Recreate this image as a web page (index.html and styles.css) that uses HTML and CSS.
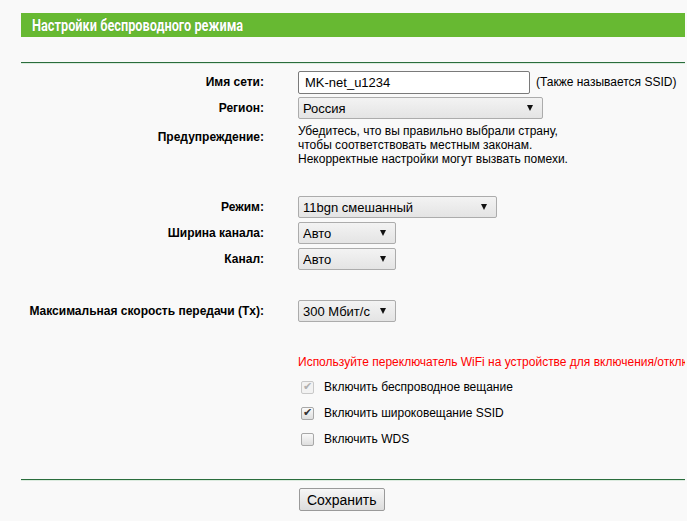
FILE: index.html
```html
<!DOCTYPE html>
<html lang="ru">
<head>
    <meta charset="UTF-8">
    <title>Настройки беспроводного режима</title>
    <link rel="stylesheet" href="styles.css">
</head>
<body>

<div class="page">
    <h1 class="title"><span class="title-text">Настройки беспроводного режима</span></h1>

    <div class="form">
        <div class="row">
            <label class="lbl" for="ssid">Имя сети:</label>
            <div class="val">
                <input type="text" id="ssid" class="text-input" value="MK-net_u1234">
                <span class="hint">(Также называется SSID)</span>
            </div>
        </div>

        <div class="row">
            <label class="lbl" for="region">Регион:</label>
            <div class="val">
                <span class="select w-region"><select id="region"><option>Россия</option></select></span>
            </div>
        </div>

        <div class="row row-top">
            <label class="lbl lbl-warn">Предупреждение:</label>
            <div class="val warn">
                Убедитесь, что вы правильно выбрали страну,<br>
                чтобы соответствовать местным законам.<br>
                Некорректные настройки могут вызвать помехи.
            </div>
        </div>

        <div class="row gap-big">
            <label class="lbl" for="mode">Режим:</label>
            <div class="val">
                <span class="select w-mode"><select id="mode"><option>11bgn смешанный</option></select></span>
            </div>
        </div>

        <div class="row">
            <label class="lbl" for="width">Ширина канала:</label>
            <div class="val">
                <span class="select w-small"><select id="width"><option>Авто</option></select></span>
            </div>
        </div>

        <div class="row">
            <label class="lbl" for="channel">Канал:</label>
            <div class="val">
                <span class="select w-small"><select id="channel"><option>Авто</option></select></span>
            </div>
        </div>

        <div class="row gap">
            <label class="lbl" for="rate">Максимальная скорость передачи (Tx):</label>
            <div class="val">
                <span class="select w-small"><select id="rate"><option>300 Мбит/с</option></select></span>
            </div>
        </div>

        <div class="row gap note-row">
            <span class="lbl"></span>
            <div class="val note">Используйте переключатель WiFi на устройстве для включения/отключения</div>
        </div>

        <div class="row">
            <span class="lbl"></span>
            <label class="val check"><input type="checkbox" checked disabled> Включить беспроводное вещание</label>
        </div>

        <div class="row">
            <span class="lbl"></span>
            <label class="val check"><input type="checkbox" checked> Включить широковещание SSID</label>
        </div>

        <div class="row">
            <span class="lbl"></span>
            <label class="val check"><input type="checkbox"> Включить WDS</label>
        </div>
    </div>

    <div class="footer">
        <button class="save">Сохранить</button>
    </div>
</div>

</body>
</html>
```

FILE: styles.css
```css
html {
    background-color: #ececec;
}

body {
    margin: 0;
    font-family: "Liberation Sans", Arial, sans-serif;
    font-size: 12px;
    color: #000;
    overflow: hidden;
}

.page {
    width: 664px;
    min-height: 521px;
    padding: 13px 2px 0 21px;
    background-color: #f9f9f9;
}

.title {
    margin: 0;
    height: 24px;
    line-height: 24px;
    padding-left: 11px;
    background-color: #67b932;
    color: #fff;
    font-family: Roboto, "Liberation Sans", sans-serif;
    font-size: 17px;
    font-weight: bold;
    text-shadow: 0 0 1px rgba(0, 0, 0, 0.25);
    white-space: nowrap;
}

/* the original uses a condensed face, squeeze the regular one */
.title-text {
    display: inline-block;
    transform: scaleX(0.75);
    transform-origin: left center;
}

.form {
    margin-top: 25px;
    padding-top: 6px;
    border-top: 1px solid #2a6d3c;
    box-shadow: inset 0 1px 0 #dcebdf;
}

.row {
    display: grid;
    grid-template-columns: 243px 1fr;
    column-gap: 34px;
    align-items: center;
    min-height: 26px;
}

.row-top {
    align-items: start;
    padding-top: 3px;
}

.gap-big {
    margin-top: 28px;
}

.gap {
    margin-top: 26px;
}

.lbl {
    text-align: right;
    font-weight: bold;
    white-space: nowrap;
}

.lbl-warn {
    padding-top: 6px;
}

.val {
    display: flex;
    align-items: center;
    white-space: nowrap;
    min-width: 0;
}

.warn {
    display: block;
    line-height: 14px;
}

.text-input {
    width: 232px;
    height: 23px;
    box-sizing: border-box;
    padding: 0 6px;
    border: 1px solid #7a7a7a;
    border-radius: 2px;
    background-color: #fff;
    font-family: "Liberation Sans", Arial, sans-serif;
    font-size: 13px;
}

.hint {
    margin-left: 6px;
    font-size: 12px;
}

.select {
    position: relative;
    display: inline-block;
}

.select select {
    appearance: none;
    width: 100%;
    height: 22px;
    padding: 0 4px;
    border: 1px solid #acacac;
    border-radius: 2px;
    background: linear-gradient(#f3f3f3, #e4e4e4);
    font-family: "Liberation Sans", Arial, sans-serif;
    font-size: 13px;
    color: #000;
}

.select::after {
    content: "";
    position: absolute;
    right: 10px;
    top: 8px;
    border-left: 3.5px solid transparent;
    border-right: 3.5px solid transparent;
    border-top: 6px solid #111;
    pointer-events: none;
}

.w-region {
    width: 245px;
}

.w-mode {
    width: 199px;
}

.w-small {
    width: 98px;
}

.note-row {
    min-height: 24px;
}

.note {
    color: #ff0000;
    font-size: 12px;
    overflow: hidden;
}

.check {
    font-size: 12px;
}

.check input {
    appearance: none;
    position: relative;
    width: 13px;
    height: 13px;
    margin: 0 10px 0 3px;
    border: 1px solid #a8a8a8;
    border-radius: 2px;
    background: linear-gradient(#fafafa, #dedede);
}

.check input:checked::before {
    content: "\2714";
    position: absolute;
    left: 1px;
    top: -2px;
    font-size: 11px;
    color: #333;
}

.check input:disabled {
    border-color: #c8c8c8;
    background: #f2f2f2;
}

.check input:disabled::before {
    color: #b0b0b0;
}

.footer {
    margin-top: 27px;
    padding: 8px 0 0 278px;
    border-top: 1px solid #2a6d3c;
    box-shadow: inset 0 1px 0 #dcebdf;
}

.save {
    height: 23px;
    padding: 0 7px;
    border: 1px solid #9a9a9a;
    border-radius: 2px;
    background: linear-gradient(#f6f6f6, #dddddd);
    font-family: "Liberation Sans", Arial, sans-serif;
    font-size: 14px;
    color: #000;
}
```
